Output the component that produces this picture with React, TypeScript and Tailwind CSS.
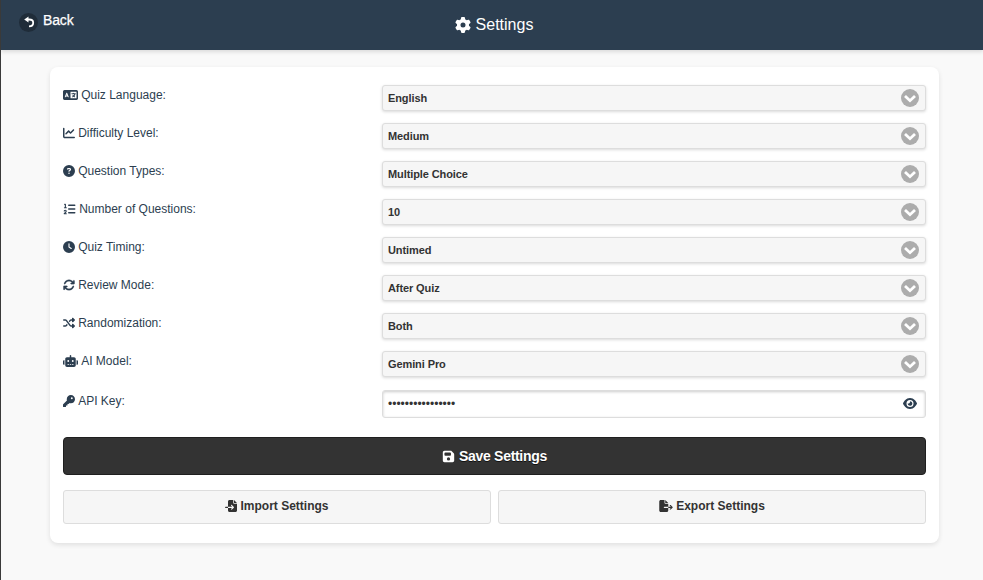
import type { IconType } from "react-icons";
import {
  FaLanguage,
  FaChartLine,
  FaCircleQuestion,
  FaListOl,
  FaClock,
  FaArrowsRotate,
  FaShuffle,
  FaRobot,
  FaKey,
  FaEye,
  FaFloppyDisk,
  FaFileImport,
  FaFileExport,
  FaGear,
} from "react-icons/fa6";

const rows: { icon: IconType; label: string; value: string; size: string }[] = [
  { icon: FaLanguage, label: "Quiz Language:", value: "English", size: "h-3 w-[15px] scale-y-110" },
  { icon: FaChartLine, label: "Difficulty Level:", value: "Medium", size: "h-3 w-3" },
  { icon: FaCircleQuestion, label: "Question Types:", value: "Multiple Choice", size: "h-3 w-3" },
  { icon: FaListOl, label: "Number of Questions:", value: "10", size: "h-3 w-[13px]" },
  { icon: FaClock, label: "Quiz Timing:", value: "Untimed", size: "h-3 w-3" },
  { icon: FaArrowsRotate, label: "Review Mode:", value: "After Quiz", size: "h-3 w-3 stroke-[#2c3e50] stroke-[8px]" },
  { icon: FaShuffle, label: "Randomization:", value: "Both", size: "h-3 w-3" },
  { icon: FaRobot, label: "AI Model:", value: "Gemini Pro", size: "h-3 w-[15px]" },
];

function Label({ icon: Icon, text, size }: { icon: IconType; text: string; size: string }) {
  return (
    <div className="flex h-4 w-[319px] shrink-0 items-center gap-[3.2px] text-xs leading-4 text-[#2c3e50]">
      <Icon className={`shrink-0 ${size}`} />
      <span>{text}</span>
    </div>
  );
}

export default function App() {
  return (
    <div className="h-[580px] w-[983px] overflow-hidden border-l border-[#3a3a3a] bg-[#f9f9f9] font-['Liberation_Sans',Arial,sans-serif]">
      <header className="grid h-[50px] grid-cols-[1fr_auto_1fr] bg-[#2c3e50] text-white shadow-[0_2px_4px_rgba(0,0,0,0.12)]">
        <button className="mt-[10px] flex h-[22px] items-center gap-[5px] self-start pl-[18px] text-sm leading-5">
          <span className="mt-[2px] flex size-[19px] items-center justify-center rounded-full bg-[#1f2c39]">
            <svg viewBox="0 0 14 14" className="size-[14px]">
              <path d="M6.500 1.500v6L2.200 4.500z" fill="#fff" />
              <path d="M5.500 4.500h1.700c2.600 0 4 1.400 4 3.300 0 2.200-1.400 3.600-4.200 3.600" fill="none" stroke="#fff" strokeWidth="1.800" />
            </svg>
          </span>
          <span className="-mt-[2px] tracking-[-0.15px] [-webkit-text-stroke:0.25px_#fff]">Back</span>
        </button>
        <h1 className="flex items-center gap-[5px] pb-px pl-1 text-base leading-5">
          <FaGear className="size-4" />
          <span>Settings</span>
        </h1>
      </header>

      <main className="mt-[17px] ml-[49px] h-[476px] w-[889px] rounded-lg bg-white px-[13px] pt-[18px] shadow-[0_2px_5px_rgba(0,0,0,0.1)]">
        {rows.map((r) => (
          <div key={r.label} className="flex h-[38px] items-start">
            <div className="mt-[2px]">
              <Label icon={r.icon} text={r.label} size={r.size} />
            </div>
            <button className="flex h-[26px] flex-1 items-center justify-between rounded-[3px] border border-[#ddd] bg-[#f6f6f6] pr-[6px] pl-[5px] text-[11px] font-bold tracking-[-0.1px] text-[#333] shadow-[0_1px_3px_rgba(0,0,0,0.15)]">
              <span>{r.value}</span>
              <svg viewBox="0 0 18 18" className="size-[18px]">
                <circle cx="9" cy="9" r="9" fill="#acacac" />
                <path d="M4 7 9 11.700 14 7" fill="none" stroke="#fff" strokeWidth="2.800" />
              </svg>
            </button>
          </div>
        ))}

        <div className="mt-px flex h-[28px] items-start">
          <div className="mt-[3px]">
            <Label icon={FaKey} text="API Key:" size="h-3 w-3" />
          </div>
          <div className="flex h-[28px] flex-1 items-center justify-between rounded-[3px] border border-[#ddd] bg-white pr-2 pl-[5px] shadow-[inset_0_1px_3px_rgba(0,0,0,0.2)]">
            <span className="text-xs text-[#333]">••••••••••••••••</span>
            <FaEye className="mb-[2px] h-[13px] w-[14px] text-[#2c3e50]" />
          </div>
        </div>

        <button className="mt-[19px] flex h-[38px] w-full items-center justify-center gap-1 rounded-[4px] border border-[#1f1f1f] bg-[#333] text-sm font-bold text-white [text-shadow:0_1px_0_#111]">
          <FaFloppyDisk className="size-[13px]" />
          <span className="tracking-[-0.3px]">Save Settings</span>
        </button>

        <div className="mt-[15px] grid grid-cols-2 gap-[7px]">
          <button className="flex h-[34px] items-center justify-center gap-[3px] rounded-[3px] border border-[#ddd] bg-[#f6f6f6] pb-[2px] text-xs font-bold text-[#333]">
            <FaFileImport className="size-3" />
            Import Settings
          </button>
          <button className="flex h-[34px] items-center justify-center gap-[3px] rounded-[3px] border border-[#ddd] bg-[#f6f6f6] pb-[2px] text-xs font-bold text-[#333]">
            <FaFileExport className="h-3 w-[14px]" />
            Export Settings
          </button>
        </div>
      </main>
    </div>
  );
}
